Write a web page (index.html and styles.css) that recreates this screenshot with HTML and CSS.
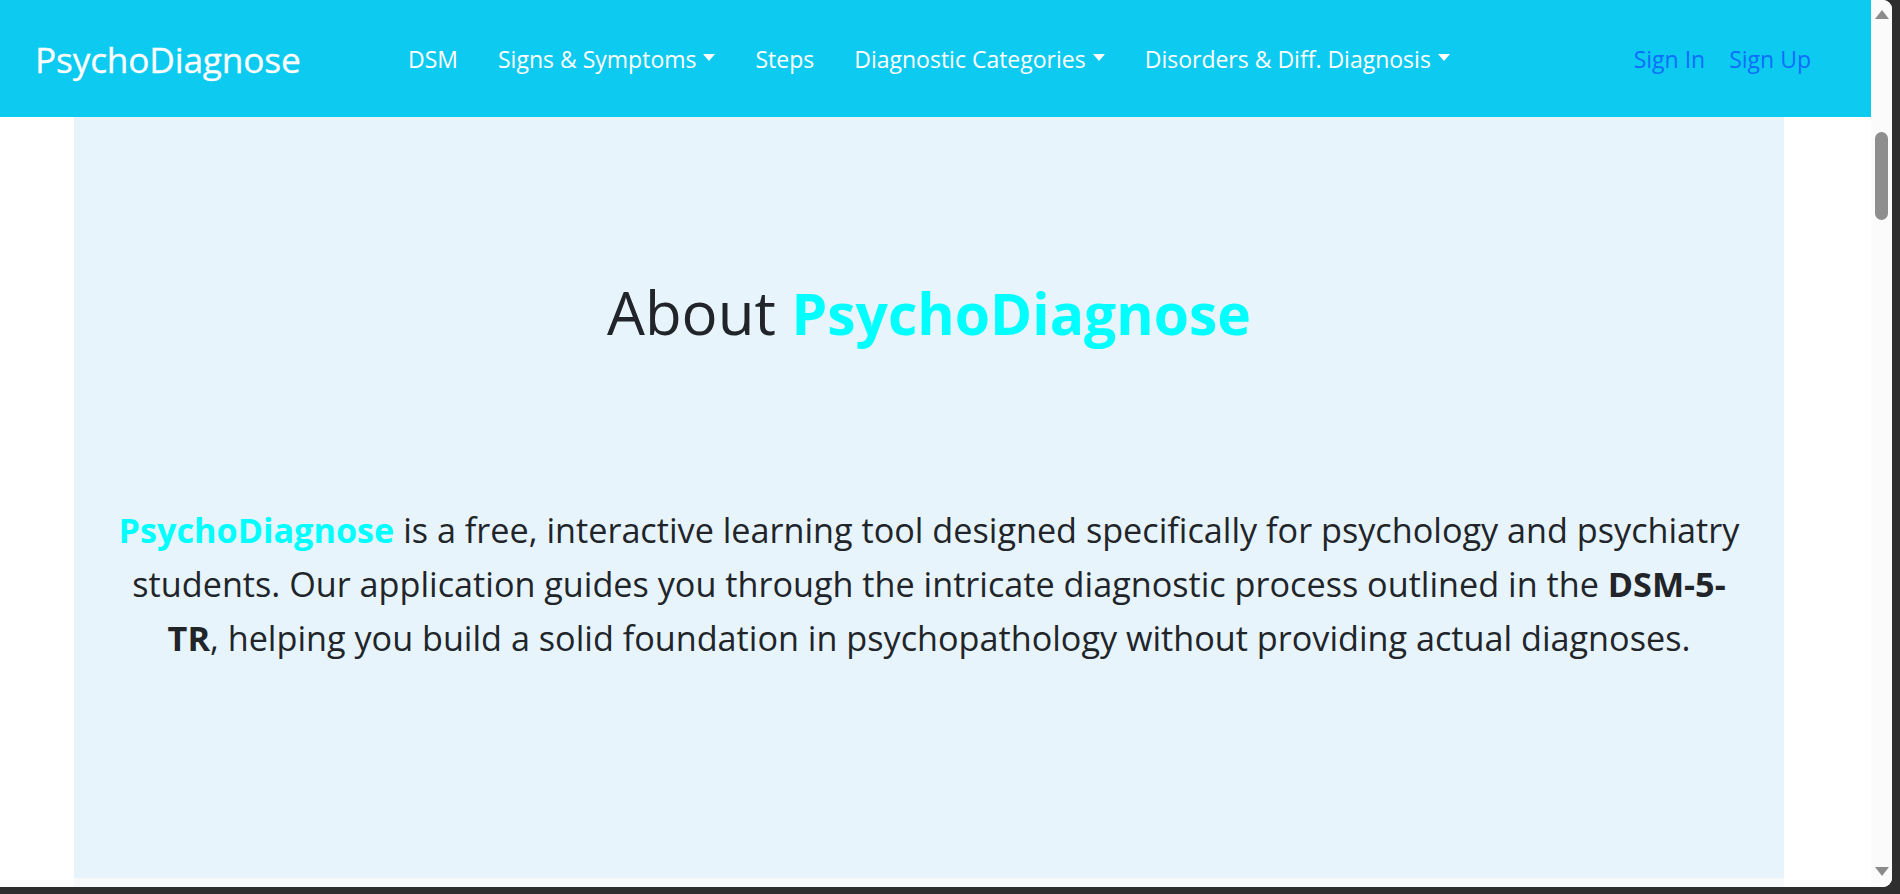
FILE: index.html
```html
<!DOCTYPE html>
<html lang="en">
<head>
<meta charset="utf-8">
<title>About PsychoDiagnose</title>
<link rel="stylesheet" href="styles.css">
</head>
<body>
<div class="window">
  <div class="page">
    <nav class="navbar">
      <a class="brand" href="#">PsychoDiagnose</a>
      <ul class="nav">
        <li><a class="nav-link" href="#">DSM</a></li>
        <li><a class="nav-link" href="#">Signs &amp; Symptoms<span class="caret"></span></a></li>
        <li><a class="nav-link" href="#">Steps</a></li>
        <li><a class="nav-link" href="#">Diagnostic Categories<span class="caret"></span></a></li>
        <li><a class="nav-link" href="#">Disorders &amp; Diff. Diagnosis<span class="caret"></span></a></li>
      </ul>
      <div class="auth">
        <a class="auth-link" href="#">Sign In</a>
        <a class="auth-link" href="#">Sign Up</a>
      </div>
    </nav>
    <main class="about">
      <h1 class="about-title">About <span class="accent">PsychoDiagnose</span></h1>
      <p class="about-text"><strong class="accent">PsychoDiagnose</strong> is a free, interactive learning tool designed specifically for psychology and psychiatry students. Our application guides you through the intricate diagnostic process outlined in the <strong>DSM-5-TR</strong>, helping you build a solid foundation in psychopathology without providing actual diagnoses.</p>
    </main>
    <div class="next-section"></div>
  </div>
  <div class="scrollbar">
    <span class="arrow arrow-up"></span>
    <span class="thumb"></span>
    <span class="arrow arrow-down"></span>
  </div>
</div>
</body>
</html>
```
FILE: styles.css
```css
* { box-sizing: border-box; }
html, body { margin: 0; padding: 0; }
body {
  width: 1900px;
  height: 894px;
  overflow: hidden;
  background: #2e2e2e;
  font-family: "Open Sans", "Noto Sans", sans-serif;
  color: #212529;
}
a { text-decoration: none; }

.window {
  width: 1892px;
  height: 887px;
  background: #ffffff;
  border-radius: 0 9px 9px 0;
  overflow: hidden;
  display: flex;
}
.page {
  flex: 1;
  display: flex;
  flex-direction: column;
}

/* navbar */
.navbar {
  height: 117px;
  flex: none;
  background: #0dcaf0;
  display: flex;
  align-items: center;
  padding: 0 60px 0 35px;
}
.brand {
  width: 373px;
  color: #ffffff;
  font-size: 35.3px;
  font-weight: 500;
  letter-spacing: -0.2px;
  -webkit-text-stroke: 0.3px #ffffff;
}
.nav {
  display: flex;
  align-items: center;
  gap: 40px;
  list-style: none;
  margin: 0;
  padding: 0;
}
.nav-link {
  color: #ffffff;
  font-size: 23px;
  display: inline-flex;
  align-items: center;
}
.caret {
  display: inline-block;
  margin-left: 7px;
  width: 0;
  height: 0;
  border-top: 7px solid #ffffff;
  border-left: 6.5px solid transparent;
  border-right: 6.5px solid transparent;
  position: relative;
  top: -1px;
}
.auth {
  margin-left: auto;
  display: flex;
  gap: 24px;
}
.auth-link {
  color: #0d6efd;
  font-size: 23px;
}

/* about */
.about {
  margin-left: 74px;
  width: 1710px;
  height: 761px;
  flex: none;
  background: #e7f4fc;
  padding: 159px 0 0;
  text-align: center;
}
.about-title {
  margin: 0;
  font-size: 60px;
  line-height: 72px;
  font-weight: 400;
  color: #212529;
}
.about-title .accent {
  font-weight: 700;
  font-size: 57px;
}
.accent { color: #00ffff; }
.about-text {
  width: 1632px;
  margin: 154px auto 0;
  font-size: 34.2px;
  line-height: 54px;
  color: #212529;
}
.about-text strong { font-weight: 700; }
.next-section {
  margin-left: 74px;
  width: 1710px;
  height: 10px;
  background: #f8f9fa;
}

/* scrollbar */
.scrollbar {
  width: 21px;
  flex: none;
  background: #fbfbfb;
  display: flex;
  flex-direction: column;
  align-items: center;
  padding: 10px 0 11px;
}
.arrow {
  width: 0;
  height: 0;
  border-left: 7px solid transparent;
  border-right: 7px solid transparent;
}
.arrow-up { border-bottom: 9px solid #8b8b8b; }
.arrow-down { border-top: 9px solid #8b8b8b; margin-top: auto; }
.thumb {
  margin-top: 113px;
  width: 13px;
  height: 88px;
  border-radius: 7px;
  background: #8e8e8e;
}
```
